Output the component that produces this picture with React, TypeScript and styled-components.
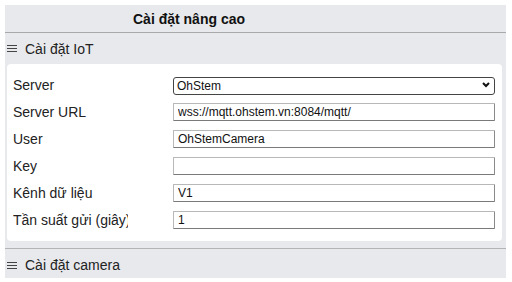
import React from "react";
import styled, { createGlobalStyle } from "styled-components";

const GlobalStyle = createGlobalStyle`
  body {
    margin: 0;
    background: #ffffff;
    font-family: "Liberation Sans", Arial, sans-serif;
    color: #1a1a1a;
  }
`;

const Panel = styled.div`
  margin: 5px 6px 0 5px;
  width: 501px;
  background: #e8e9ec;
  display: flex;
  flex-direction: column;
  & > * {
    flex-shrink: 0;
  }
`;

const Header = styled.div`
  height: 27px;
  border-bottom: 1px solid #a9a9a9;
  display: flex;
  align-items: center;
  padding-left: 128px;
  font-size: 14px;
  font-weight: bold;
  color: #111;
`;

const SectionHeader = styled.div<{ $top?: boolean }>`
  box-sizing: border-box;
  height: ${(p) => (p.$top ? 31 : 30)}px;
  display: flex;
  align-items: center;
  gap: 8px;
  padding-left: 2px;
  padding-top: ${(p) => (p.$top ? 0 : 3)}px;
  font-size: 14px;
  color: #222;
  border-top: ${(p) => (p.$top ? "none" : "1px solid #b4b4b4")};
`;

const Card = styled.div`
  margin: 0 4px 7px 2px;
  background: #ffffff;
  border-radius: 4px;
  padding: 12px 7px 12px 6px;
  display: flex;
  flex-direction: column;
  gap: 9px;
`;

const Row = styled.div`
  display: grid;
  grid-template-columns: 160px 1fr;
  align-items: center;
  height: 18px;
`;

const Label = styled.span`
  display: block;
  width: 115px;
  overflow: hidden;
  white-space: nowrap;
  font-size: 14px;
  color: #222;
`;

const TextInput = styled.input`
  box-sizing: border-box;
  width: 100%;
  height: 18px;
  margin: 0;
  padding: 0 4px;
  font-family: "Liberation Sans", Arial, sans-serif;
  font-size: 12px;
  color: #111;
  background: #fff;
  border: 1px solid #b8b8b8;
  border-bottom-color: #7a7a7a;
  border-right-color: #8a8a8a;
  border-radius: 1px;
  outline: none;
`;

const SelectWrap = styled.div`
  position: relative;
  height: 18px;
`;

const Select = styled.select`
  box-sizing: border-box;
  width: 100%;
  height: 18px;
  margin: 0;
  padding: 0 20px 0 3px;
  appearance: none;
  font-family: "Liberation Sans", Arial, sans-serif;
  font-size: 12px;
  color: #111;
  background: #fff;
  border: 1px solid #444;
  border-radius: 3px;
  outline: none;
`;

const Chevron = styled.svg`
  position: absolute;
  right: 5px;
  top: 6px;
  pointer-events: none;
`;

const fields = [
  { label: "Server URL", value: "wss://mqtt.ohstem.vn:8084/mqtt/" },
  { label: "User", value: "OhStemCamera" },
  { label: "Key", value: "" },
  { label: "Kênh dữ liệu", value: "V1" },
  { label: "Tần suất gửi (giây)", value: "1" },
];

const MenuIcon = () => (
  <svg width="10" height="9" viewBox="0 0 10 9">
    <path d="M0 1.5h10M0 4.5h10M0 7.5h10" stroke="#444" strokeWidth="1" />
  </svg>
);

export default function App() {
  return (
    <>
      <GlobalStyle />
      <Panel>
        <Header>Cài đặt nâng cao</Header>
        <SectionHeader $top>
          <MenuIcon />
          Cài đặt IoT
        </SectionHeader>
        <Card>
          <Row>
            <Label>Server</Label>
            <SelectWrap>
              <Select defaultValue="OhStem">
                <option>OhStem</option>
              </Select>
              <Chevron width="8" height="6" viewBox="0 0 8 6">
                <path d="M1 1l3 3 3-3" fill="none" stroke="#111" strokeWidth="2" />
              </Chevron>
            </SelectWrap>
          </Row>
          {fields.map((f) => (
            <Row key={f.label}>
              <Label>{f.label}</Label>
              <TextInput defaultValue={f.value} />
            </Row>
          ))}
        </Card>
        <SectionHeader>
          <MenuIcon />
          Cài đặt camera
        </SectionHeader>
      </Panel>
    </>
  );
}
